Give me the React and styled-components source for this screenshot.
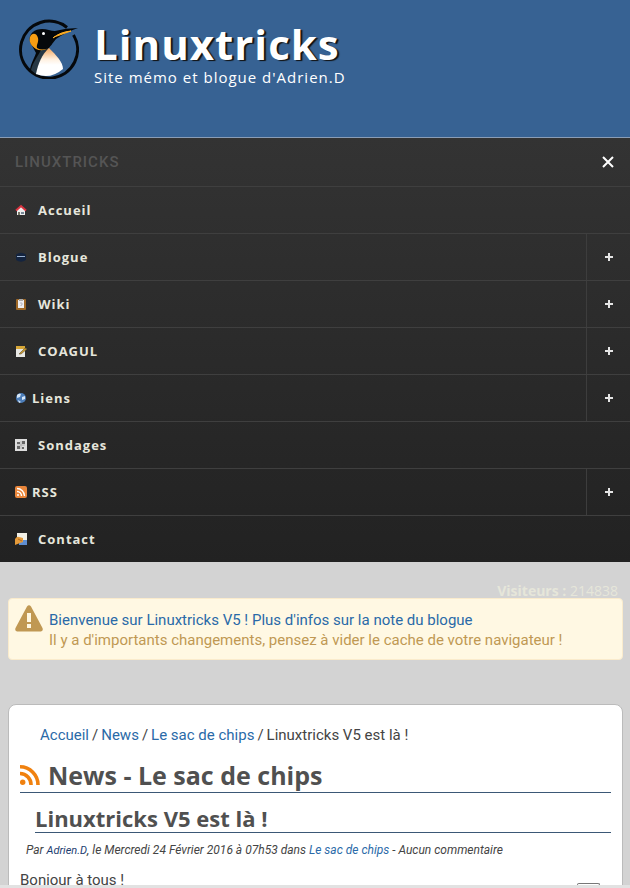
import React, { useState } from "react";
import styled, { createGlobalStyle } from "styled-components";

const GlobalStyle = createGlobalStyle`
  * {
    box-sizing: border-box;
  }
  html {
    scrollbar-width: none;
  }
  body {
    margin: 0;
    background: #d3d3d3;
    color: #444;
    font-family: Roboto, "Liberation Sans", sans-serif;
    font-size: 15px;
    line-height: 20px;
  }
  a {
    color: #2a6aa8;
    text-decoration: none;
  }
`;

const Header = styled.header`
  display: flex;
  gap: 15px;
  min-height: 137px;
  padding: 17px;
  background: #376293;
  color: #fff;
`;
const Brand = styled.div`
  padding-top: 3px;
`;
const SiteName = styled.h1`
  margin: 0;
  font-family: "Open Sans", sans-serif;
  font-size: 42px;
  line-height: 48px;
  letter-spacing: 1px;
  text-shadow: 2px 1px 1px #111;
`;
const Tagline = styled.p`
  margin: 0;
  font-family: "Open Sans", sans-serif;
  font-size: 15px;
  line-height: 18px;
  letter-spacing: 1px;
`;

const Nav = styled.nav`
  border-top: 1px solid #8a9db6;
  background: linear-gradient(#333, #222);
`;
const NavHead = styled.div`
  display: flex;
  align-items: center;
  justify-content: space-between;
  height: 48px;
  padding-left: 15px;
  color: #555;
  font-size: 15px;
  font-weight: 500;
  letter-spacing: 1px;
`;
const NavButton = styled.button`
  display: grid;
  place-items: center;
  width: 44px;
  height: 100%;
  padding: 0;
  border: 0;
  background: none;
  color: #eee;
  cursor: pointer;
`;
const NavList = styled.ul`
  margin: 0;
  padding: 0;
  list-style: none;
`;
const NavItem = styled.li`
  display: flex;
  height: 47px;
  border-top: 1px solid #3f3f3f;

  ${NavButton} {
    border-left: 1px solid #3d3d3d;
  }
`;
const NavLink = styled.a`
  display: flex;
  flex: 1;
  align-items: center;
  gap: ${(props) => (props.$tight ? "5px" : "11px")};
  padding-left: 15px;
  color: #e6e6dc;
  font-family: "Open Sans", sans-serif;
  font-size: 13px;
  font-weight: 700;
  letter-spacing: 1px;
`;

const Visitors = styled.p`
  margin: 0;
  padding: 20px 12px 0 0;
  height: 36px;
  color: #e6e6da;
  font-family: "Open Sans", sans-serif;
  font-size: 14px;
  line-height: 18px;
  text-align: right;
`;
const Notice = styled.section`
  display: flex;
  gap: 6px;
  margin: 0 7px 44px 8px;
  padding: 6px 6px 9px;
  border: 1px solid #faebcc;
  border-radius: 4px;
  background: #fff8e3;
  color: #c09853;

  p {
    margin: 5px 0 0;
  }
`;

const Card = styled.main`
  margin: 0 7px 0 8px;
  padding: 20px 11px 16px;
  border: 1px solid #bbb;
  border-radius: 8px;
  background: #fff;
`;
const Breadcrumb = styled.ol`
  display: flex;
  flex-wrap: wrap;
  gap: 3px;
  margin: 0;
  padding-left: 20px;
  list-style: none;

  li + li::before {
    content: "/";
    margin-right: 3px;
  }
`;
const PageTitle = styled.h2`
  display: flex;
  align-items: center;
  gap: 8px;
  margin: 14px 0 0;
  padding-bottom: 1px;
  border-bottom: 1px solid #3b5876;
  color: #505050;
  font-family: "Open Sans", sans-serif;
  font-size: 25px;
  line-height: 32px;
`;
const ArticleTitle = styled.h3`
  margin: 12px 0 0 15px;
  border-bottom: 1px solid #3b5876;
  color: #505050;
  font-family: "Open Sans", sans-serif;
  font-size: 22px;
  line-height: 27px;
`;
const Meta = styled.p`
  margin: 7px 0 9px 6px;
  font-size: 12px;
  font-style: italic;
`;
const Author = styled.a`
  color: #1c3d70;
  font-size: 11px;
`;
const Intro = styled.p`
  margin: 0;
`;

const BottomEdge = styled.div`
  position: fixed;
  right: 0;
  bottom: 0;
  left: 0;
  height: 3px;
  background: #e2e2e2;
`;
const ToTop = styled.a`
  position: fixed;
  right: 30px;
  bottom: 0;
  width: 23px;
  height: 5px;
  border: 1px solid #777;
  border-bottom: 0;
  border-radius: 2px 2px 0 0;
`;

const Logo = () => (
  <svg width="62" height="62" viewBox="0 0 62 62" aria-hidden="true">
    <defs>
      <linearGradient id="belly" x1="0" y1="0" x2="0" y2="1">
        <stop offset="0" stopColor="#f3a65c" />
        <stop offset=".4" stopColor="#fff0df" />
        <stop offset=".6" stopColor="#fff" />
      </linearGradient>
    </defs>
    <path
      d="M56.500 18A28.500 28.500 0 1 1 50 10.500"
      fill="none"
      stroke="#05080b"
      strokeWidth="3"
    />
    <path d="M13 54C13 48 17 42 19 36L13 25C11 16 18 12 25 12C30 12 34 14 38 14Q49 11 61 11Q49 15 39 22C35 27 34 29 30 33L24 57Z" fill="#05080b" />
    <path d="M14 53C16 45 21 39 24 33L30 32C25 42 22 47 20 58Z" fill="#263744" />
    <path d="M32 31C39 38 46 45 46 52Q33 63 19 57C21 47 25 37 32 31Z" fill="url(#belly)" />
    <path d="M13 20C15 15 20 16 21 21C22 25 19 28 20 31Q25 34 32 31Q25 35 19 32C13 28 12 24 13 20Z" fill="#f79d12" />
    <path d="M36 21Q43 15 54 14L37 20Z" fill="#ffaf25" stroke="#ffaf25" />
    <circle cx="26.500" cy="16.500" r="1.500" fill="#fff" />
  </svg>
);

const Warning = () => (
  <svg width="28" height="27" viewBox="0 0 28 27" aria-hidden="true">
    <path
      d="M12 1.500Q14-1 16 1.500L27.500 23Q28.500 26 26 26.500H2Q-.5 26 .5 23ZM12 8V17h4V8ZM12 19v4h4v-4Z"
      fill="#c09853"
      fillRule="evenodd"
    />
  </svg>
);

const Feed = () => (
  <svg width="20" height="20" viewBox="0 0 20 20" aria-hidden="true">
    <circle cx="2.700" cy="17.300" r="2.700" fill="#f0810f" />
    <path
      d="M0 8.500A11 11 0 0 1 11 20M0 1.800A18 18 0 0 1 18 20"
      fill="none"
      stroke="#f0810f"
      strokeWidth="3.600"
    />
  </svg>
);

const glyphs = {
  home: (
    <>
      <path d="M2 6h8v5H2z" fill="#eee" />
      <path d="M1 6.500 6 2l5 4.500" fill="#eee" stroke="#d93440" strokeWidth="2" />
      <path d="M3 8h2v3H3z" fill="#776" />
      <path d="M6 8h3v2H6z" fill="#789" />
    </>
  ),
  blog: (
    <>
      <path d="M1 3.500Q6 0 11 3.500V9Q6 12.500 1 9z" fill="#14243f" />
      <path d="M2 5.500h8" stroke="#9bb2d0" />
    </>
  ),
  clipboard: (
    <>
      <rect x="1" y="1" width="10" height="11" rx="1" fill="#9e6827" />
      <path d="M3 2h6v8H3z" fill="#eeeef2" />
      <path d="M4 1h4v2H4z" fill="#aaa" />
      <path d="M5 5h2v2H6v1" fill="none" stroke="#b4b4c0" />
    </>
  ),
  note: (
    <>
      <path d="M1 2h9v10H1z" fill="#e8e8e4" />
      <path d="M1 1h9v3H1z" fill="#d7a737" />
      <path d="m4 9 6-6 2 1-6 5z" fill="#c8982b" stroke="#655637" strokeWidth=".6" />
    </>
  ),
  globe: (
    <>
      <circle cx="6" cy="6" r="5" fill="#4c7db8" />
      <path d="M2 3q2-2 4-1L5 5 2 6zM7 5l3-1v3l-3 1zM3 8l3 2-2 1z" fill="#d7e7f7" />
    </>
  ),
  poll: (
    <>
      <path d="M0 0h12v12H0z" fill="#ddd" />
      <path d="M2 3h3v2H2zM7 2h3v3H7zM2 7h3v3H2zM7 8h2v2H7z" fill="#666" />
      <path d="M6 2v8M2 6h8" stroke="#999" strokeWidth=".6" />
    </>
  ),
  rss: (
    <>
      <rect width="12" height="12" rx="2" fill="#e9863b" />
      <circle cx="3" cy="9" r="1" fill="#fff" />
      <path d="M2 5.500A4.500 4.500 0 0 1 6.500 10M2 2.500A7.500 7.500 0 0 1 9.500 10" fill="none" stroke="#fff" strokeWidth="1.400" />
    </>
  ),
  contact: (
    <>
      <path d="M2 0h10v8H2z" fill="#f2f0e6" />
      <path d="M4 7h8v5H4z" fill="#5f8ed1" />
      <path d="M0 6q2-3 4-2l4 1v4l-3 1-5 2z" fill="#e49a3a" />
      <path d="m3 6 4 2" stroke="#b66a1c" />
    </>
  ),
};

const Glyph = ({ name }) => (
  <svg width="12" height="12" viewBox="0 0 12 12" aria-hidden="true">
    {glyphs[name]}
  </svg>
);

const menu = [
  { label: "Accueil", icon: "home" },
  { label: "Blogue", icon: "blog", sub: true },
  { label: "Wiki", icon: "clipboard", sub: true },
  { label: "COAGUL", icon: "note", sub: true },
  { label: "Liens", icon: "globe", sub: true, tight: true },
  { label: "Sondages", icon: "poll" },
  { label: "RSS", icon: "rss", sub: true, tight: true },
  { label: "Contact", icon: "contact" },
];

export default function App() {
  const [open, setOpen] = useState(true);

  return (
    <>
      <GlobalStyle />
      <Header>
        <Logo />
        <Brand>
          <SiteName>Linuxtricks</SiteName>
          <Tagline>Site mémo et blogue d'Adrien.D</Tagline>
        </Brand>
      </Header>

      <Nav>
        <NavHead>
          LINUXTRICKS
          <NavButton aria-label="Menu" onClick={() => setOpen(!open)}>
            <svg width="12" height="12" viewBox="0 0 12 12">
              <path d="m1 1 10 10M11 1 1 11" stroke="#fff" strokeWidth="2" />
            </svg>
          </NavButton>
        </NavHead>
        {open && (
          <NavList>
            {menu.map(({ label, icon, sub, tight }) => (
              <NavItem key={label}>
                <NavLink href="#" $tight={tight}>
                  <Glyph name={icon} />
                  {label}
                </NavLink>
                {sub && (
                  <NavButton aria-label={`Ouvrir ${label}`}>
                    <svg width="8" height="8" viewBox="0 0 8 8">
                      <path d="M0 4h8M4 0v8" stroke="#e5e5e5" strokeWidth="2" />
                    </svg>
                  </NavButton>
                )}
              </NavItem>
            ))}
          </NavList>
        )}
      </Nav>

      <Visitors>
        <b>Visiteurs :</b> 214838
      </Visitors>
      <Notice>
        <Warning />
        <p>
          <a href="#">
            Bienvenue sur Linuxtricks V5 ! Plus d'infos sur la note du blogue
          </a>
          <br />
          Il y a d'importants changements, pensez à vider le cache de votre
          navigateur !
        </p>
      </Notice>

      <Card>
        <Breadcrumb>
          <li>
            <a href="#">Accueil</a>
          </li>
          <li>
            <a href="#">News</a>
          </li>
          <li>
            <a href="#">Le sac de chips</a>
          </li>
          <li>Linuxtricks V5 est là !</li>
        </Breadcrumb>
        <PageTitle>
          <Feed />
          News - Le sac de chips
        </PageTitle>
        <article>
          <ArticleTitle>Linuxtricks V5 est là !</ArticleTitle>
          <Meta>
            Par <Author href="#">Adrien.D</Author>, le Mercredi 24 Février 2016
            à 07h53 dans <a href="#">Le sac de chips</a> - Aucun commentaire
          </Meta>
          <Intro>Bonjour à tous !</Intro>
        </article>
      </Card>
      <ToTop href="#" aria-label="Haut de page" />
      <BottomEdge />
    </>
  );
}
